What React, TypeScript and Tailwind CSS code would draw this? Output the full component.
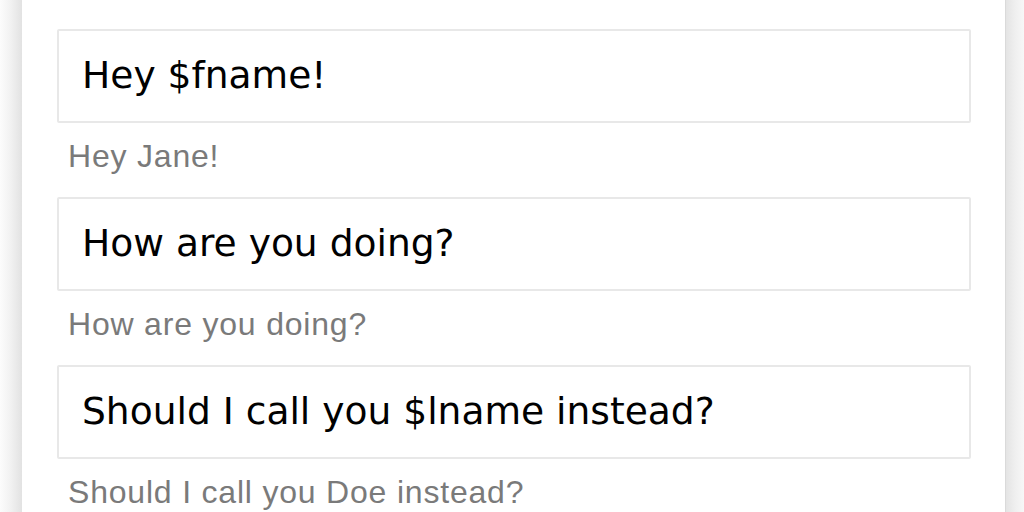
import React from "react";

const rows = [
  { input: "Hey $fname!", preview: "Hey Jane!" },
  { input: "How are you doing?", preview: "How are you doing?" },
  { input: "Should I call you $lname instead?", preview: "Should I call you Doe instead?" },
];

export default function App() {
  return (
    <div className="flex h-[512px] w-[1024px] overflow-hidden bg-white">
      <div className="h-full w-[22px] shrink-0 bg-gradient-to-r from-[#fcfcfc] via-[#f1f1f1] to-[#e2e2e2]" />
      <div className="flex h-full w-[983px] shrink-0 flex-col bg-white pl-[35px] pr-[34px] pt-[29px]">
        {rows.map((r) => (
          <div key={r.input} className="flex flex-col">
            <div className="flex h-[94px] items-center rounded-[2px] border-2 border-[#e8e8e8] bg-white pl-[23px]">
              <span
                className="text-[37.6px] leading-none text-black"
                style={{ fontFamily: '"DejaVu Sans", sans-serif' }}
              >
                {r.input}
              </span>
            </div>
            <div className="h-[74px] pl-[11px] pt-[17px]">
              <span
                className="text-[32px] leading-none text-[#7a7a7a] tracking-[0.8px]"
                style={{ fontFamily: '"Liberation Sans", Arial, sans-serif' }}
              >
                {r.preview}
              </span>
            </div>
          </div>
        ))}
      </div>
      <div className="h-full w-[19px] shrink-0 border-l border-[#dadada] bg-gradient-to-r from-[#e4e4e4] via-[#efefef] to-[#f7f7f7]" />
    </div>
  );
}
